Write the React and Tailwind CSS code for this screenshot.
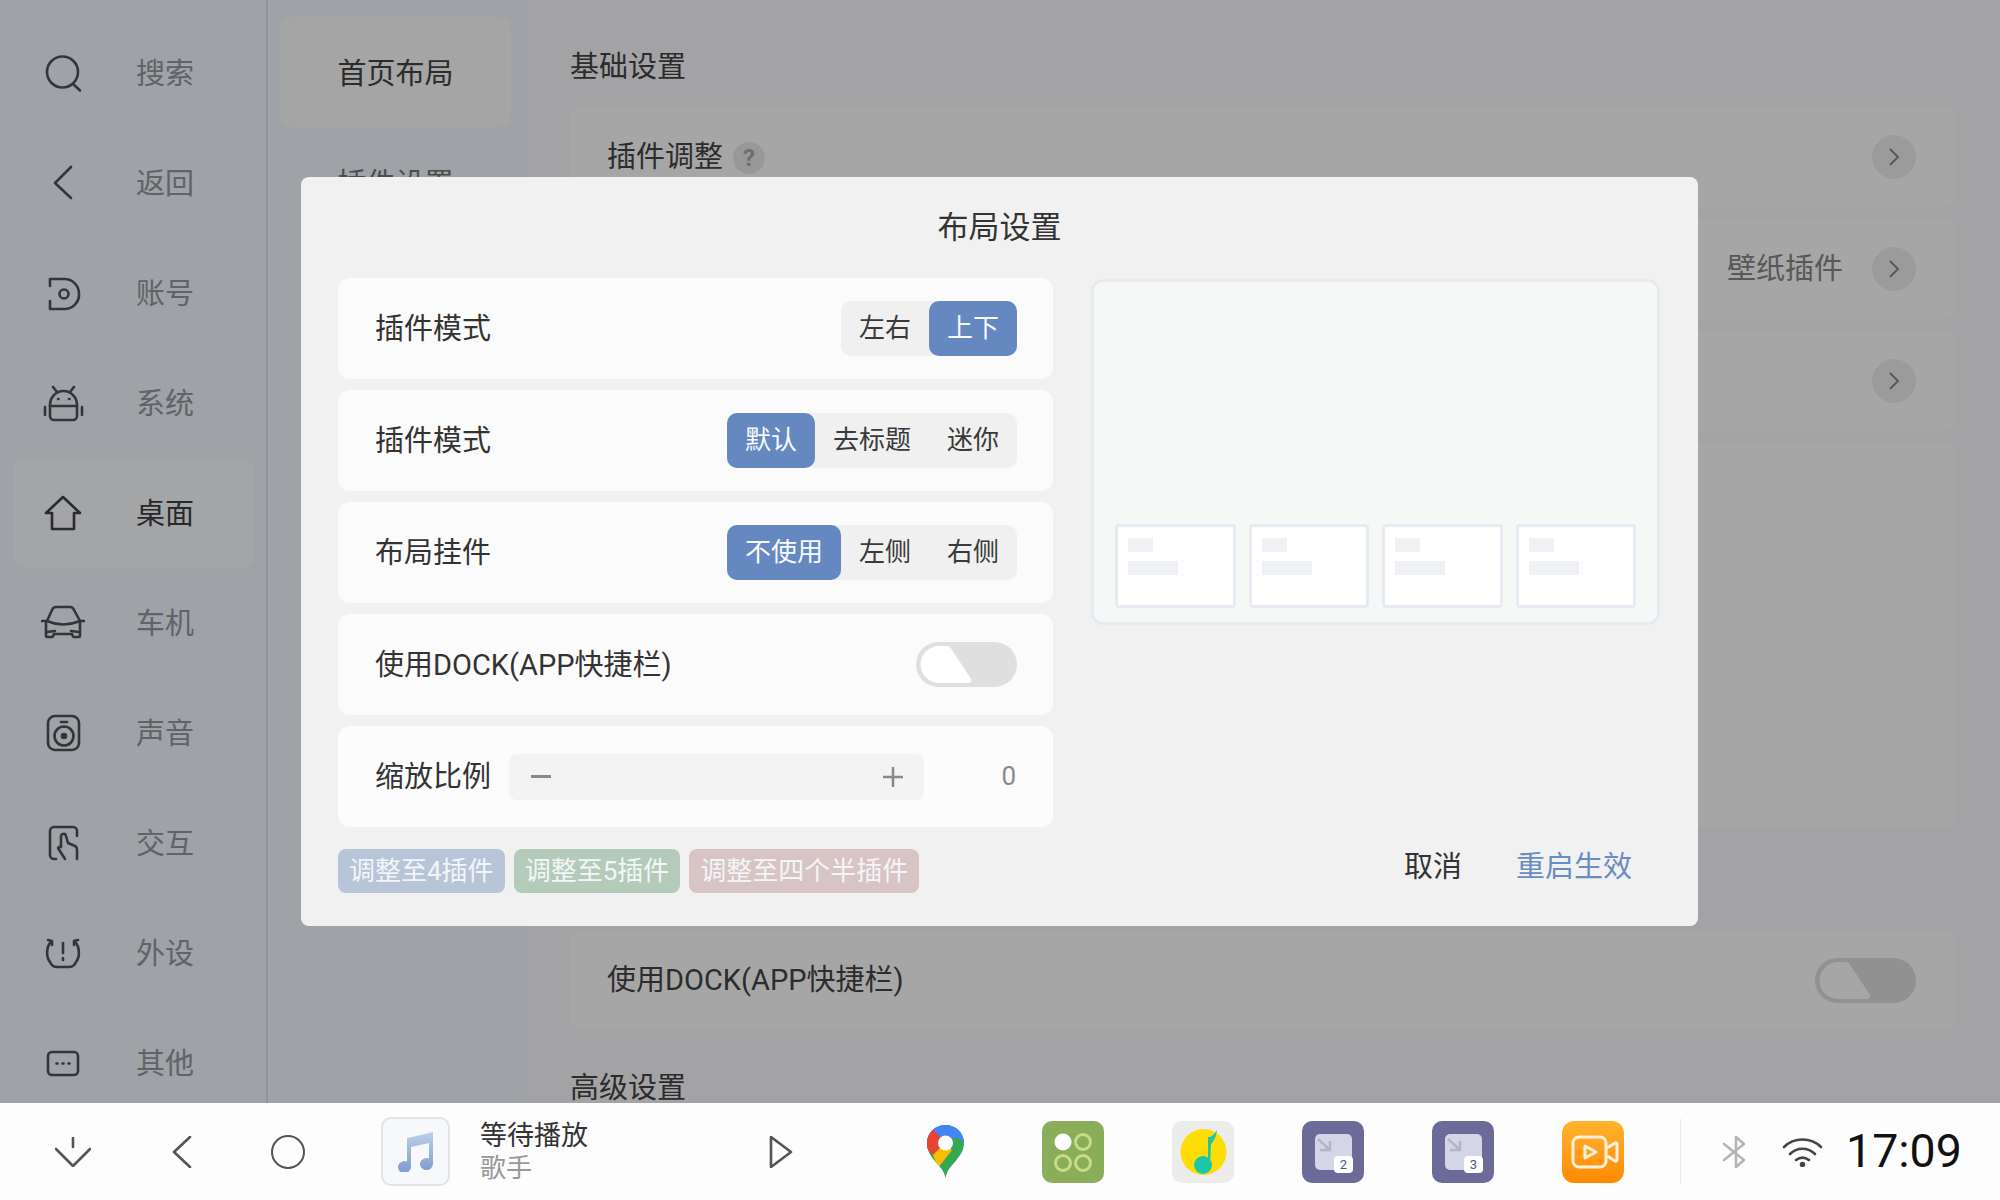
import React from "react";

// sidebar icons, all in a 44 box
const icons = {
  search: (
    <>
      <circle cx="21.5" cy="21" r="15.5" />
      <path d="M32 33l7 6.5" />
    </>
  ),
  back: <path d="M30 6L14 22l16 15" />,
  account: (
    <>
      <path d="M9 15V8h14a14.5 14.5 0 0 1 15 14.5A14.5 14.5 0 0 1 23 38H9v-8" />
      <circle cx="23" cy="23" r="4.5" />
    </>
  ),
  android: (
    <>
      <path d="M9 24a13.500 14 0 0 1 27 0v11a4 4 0 0 1-4 4H13a4 4 0 0 1-4-4Z" />
      <path d="M9 25h27M12 6l4 5M33 6l-4 5M4 26v8M41 26v8" />
      <path d="M17 18h.5M28 18h.5" />
    </>
  ),
  home: <path d="M22 6L5 22h6v16h22V22h6Z" />,
  car: (
    <>
      <path d="M6 20L11 9q1-3 4-3h14q3 0 4 3l6 11" />
      <path d="M6 20Q22 27 39 20M1 20h5M39 20h4" />
      <path d="M5 21v14q0 1 1 1h5q1 0 2-3h18q1 3 2 3h5q1 0 1-1V21M6 31l8-1M38 31l-8-1" />
    </>
  ),
  speaker: (
    <>
      <rect x="7" y="5" width="31" height="34" rx="7" />
      <circle cx="23" cy="25" r="9.500" />
      <circle cx="23" cy="25" r="2" fill="currentColor" />
      <path d="M20 11h6" />
    </>
  ),
  touch: (
    <>
      <path d="M15 38h-2a4 4 0 0 1-4-4V10a4 4 0 0 1 4-4h19a4 4 0 0 1 4 4v5" />
      <path d="M24 38L17 27q2-2 3-1L20 16a2.500 2.500 0 0 1 5-1l2 7 7 3q2 1 2 4v9" />
    </>
  ),
  warn: (
    <>
      <path d="M10 11c-5 5-5 15-1 20q2 5 7 5h12q5 0 7-5c4-5 4-15-1-20" />
      <path d="M7 9l4 1 0 4M37 9l-4 1 0 4M22 12v10M22 27v2" />
    </>
  ),
  more: (
    <>
      <rect x="7" y="11" width="30" height="23" rx="4" />
      <path d="M15.500 22.500h1M21.500 22.500h1M27.500 22.500h1" />
    </>
  ),
};

const NAV = [
  ["search", "搜索"],
  ["back", "返回"],
  ["account", "账号"],
  ["android", "系统"],
  ["home", "桌面", true],
  ["car", "车机"],
  ["speaker", "声音"],
  ["touch", "交互"],
  ["warn", "外设"],
  ["more", "其他"],
];

function NavIcon({ name, active }) {
  return (
    <svg
      viewBox="0 0 44 44"
      fill="none"
      stroke="currentColor"
      strokeWidth="2.600"
      strokeLinecap="round"
      strokeLinejoin="round"
      className={`w-11 h-11 shrink-0 ${active ? "text-[#3f4247]" : "text-[#4f5358]"}`}
    >
      {icons[name]}
    </svg>
  );
}

function Sidebar() {
  return (
    <div className="w-[268px] shrink-0 h-full bg-[#f5f9ff] border-r-2 border-[#dee2ea] pt-[18px] overflow-hidden">
      {NAV.map(([icon, label, active]) => (
        <div
          key={label}
          className={`h-[110px] w-[241px] ml-[13px] pl-[28px] flex items-center gap-[51px] rounded-xl ${
            active ? "bg-[#fcfdff]" : ""
          }`}
        >
          <NavIcon name={icon} active={active} />
          <span className={`pt-[2px] text-[29px] leading-none ${active ? "text-[#3c3f44]" : "text-[#94989e]"}`}>{label}</span>
        </div>
      ))}
    </div>
  );
}

function SubMenu() {
  return (
    <div className="w-[257px] shrink-0 h-full bg-[#f5f9ff] pl-[12px] pt-[17px]">
      <div className="w-[231px] h-[110px] pt-[5px] rounded-xl bg-[#fdfdff] flex items-center justify-center text-[29px] text-[#444]">
        首页布局
      </div>
      <div className="w-[231px] h-[110px] pt-[5px] flex items-center justify-center text-[29px] text-[#777]">插件设置</div>
    </div>
  );
}

function Toggle() {
  return (
    <div className="w-[101px] h-[45px] rounded-full bg-[#dfdfdf] shrink-0">
      <svg viewBox="0 0 101 45" className="w-[101px] h-[45px]">
        <path d="M23 4h8q3 0 5 4l19 29q1 4-3 4H23a18.500 18.500 0 0 1 0-37Z" fill="#fff" />
      </svg>
    </div>
  );
}

function Chevron() {
  return (
    <span className="w-11 h-11 rounded-full bg-[#efefef] flex items-center justify-center shrink-0">
      <svg viewBox="0 0 20 20" fill="none" stroke="#888" strokeWidth="2" className="w-5 h-5">
        <path d="M6 2l8 8-8 8" />
      </svg>
    </span>
  );
}

function BackRow({ children, right }) {
  return (
    <div className="h-[101px] rounded-xl bg-white pl-[37px] pr-[40px] flex items-center justify-between mb-[11px]">
      <div className="flex items-center gap-[10px] pt-[2px] text-[29px] text-[#444]">{children}</div>
      {right}
    </div>
  );
}

function MainContent() {
  return (
    <div className="flex-1 h-full bg-[#fafbfe] pl-[45px] pr-[44px] pt-[46px] overflow-hidden">
      <div className="h-[40px] mb-[20px] pt-[1px] text-[29px] leading-[40px] text-[#444]">基础设置</div>
      <BackRow right={<Chevron />}>
        插件调整
        <span className="w-8 h-8 rounded-full bg-[#eaeaea] text-[#aaa] text-[24px] font-bold flex items-center justify-center">
          ?
        </span>
      </BackRow>
      <BackRow
        right={
          <div className="flex items-center gap-[29px]">
            <span className="pt-[3px] text-[29px] text-[#888]">壁纸插件</span>
            <Chevron />
          </div>
        }
      />
      <BackRow right={<div className="ml-auto"><Chevron /></div>} />
      <div className="h-[386px] rounded-xl bg-white" />
      <div className="h-[100px] mt-[102px] rounded-xl bg-white pl-[37px] pr-[40px] flex items-center justify-between">
        <span className="pt-[2px] text-[29px] text-[#444]">使用DOCK(APP快捷栏)</span>
        <Toggle />
      </div>
      <div className="mt-[38px] h-[40px] text-[29px] leading-[40px] text-[#444]">高级设置</div>
    </div>
  );
}

function Segment({ items, value }) {
  return (
    <div className="flex h-[55px] rounded-[10px] bg-[#f0f0f0]">
      {items.map((item) => (
        <div
          key={item}
          className={`px-[18px] flex items-center text-[26px] rounded-[10px] ${
            item === value ? "bg-[#6488bf] text-[#f7f9fc]" : "text-[#3a3a3a]"
          }`}
        >
          {item}
        </div>
      ))}
    </div>
  );
}

function Row({ label, children }) {
  return (
    <div className="h-[101px] rounded-xl bg-[#fbfbfb] pl-[37px] pr-[36px] flex items-center justify-between">
      <span className="pt-[2px] text-[29px] text-[#333] whitespace-nowrap">{label}</span>
      {children}
    </div>
  );
}

function Preview() {
  return (
    <div className="w-[569px] h-[346px] -ml-[2px] rounded-xl border-[3px] border-[#e8eaf1] bg-[#f6f8f8] flex items-end gap-[13px] px-[21px] pb-[14px]">
      {[0, 1, 2, 3].map((i) => (
        <div key={i} className="w-[121px] h-[84px] rounded-[4px] border-[3px] border-[#e8eaf1] bg-white pl-[10px] pt-[11px]">
          <div className="w-[25px] h-[14px] bg-[#f0f1f5]" />
          <div className="w-[50px] h-[14px] mt-[9px] bg-[#f0f1f5]" />
        </div>
      ))}
    </div>
  );
}

function Modal() {
  return (
    <div className="absolute inset-0 pr-[1px] bg-black/35 flex items-center justify-center">
      <div className="w-[1397px] h-[749px] rounded-lg bg-[#f1f1f1] flex flex-col">
        <div className="h-[101px] pt-[1px] flex items-center justify-center text-[31px] text-[#333]">布局设置</div>
        <div className="flex px-[37px] gap-[40px] flex-1">
          <div className="w-[715px] flex flex-col gap-[11px]">
            <Row label="插件模式">
              <Segment items={["左右", "上下"]} value="上下" />
            </Row>
            <Row label="插件模式">
              <Segment items={["默认", "去标题", "迷你"]} value="默认" />
            </Row>
            <Row label="布局挂件">
              <Segment items={["不使用", "左侧", "右侧"]} value="不使用" />
            </Row>
            <Row label="使用DOCK(APP快捷栏)">
              <Toggle />
            </Row>
            <div className="h-[101px] rounded-xl bg-[#fcfcfc] pl-[37px] pr-[37px] flex items-center">
              <span className="pt-[2px] text-[29px] text-[#333] whitespace-nowrap">缩放比例</span>
              <div className="ml-[18px] w-[415px] h-[46px] rounded-lg bg-[#f3f3f3] flex items-center justify-between pl-[22px] pr-[21px] text-[#777]">
                <span className="w-5 h-[3px] bg-[#888]" />
                <svg viewBox="0 0 20 20" stroke="#888" strokeWidth="2.500" className="w-5 h-5">
                  <path d="M0 10h20M10 0v20" />
                </svg>
              </div>
              <span className="ml-auto text-[26px] text-[#8a8a8a]">0</span>
            </div>
            <div className="flex gap-[9px] mt-[11px]">
              <span className="h-[44px] px-[11px] rounded-lg bg-[#b8c4d8] text-[#f3f5f8] text-[26px] flex items-center">调整至4插件</span>
              <span className="h-[44px] px-[11px] rounded-lg bg-[#b3cbb8] text-[#f3f5f8] text-[26px] flex items-center">调整至5插件</span>
              <span className="h-[44px] px-[11px] rounded-lg bg-[#d8c4c4] text-[#f3f5f8] text-[26px] flex items-center">调整至四个半插件</span>
            </div>
          </div>
          <div className="flex-1 flex flex-col">
            <div className="mt-[1px]">
              <Preview />
            </div>
            <div className="flex justify-end gap-[54px] pr-[29px] mt-[221px] text-[29px] leading-[42px]">
              <span className="text-[#333]">取消</span>
              <span className="text-[#6a8dbf]">重启生效</span>
            </div>
          </div>
        </div>
      </div>
    </div>
  );
}

function Line({ className, children, viewBox }) {
  return (
    <svg viewBox={viewBox} fill="none" stroke="#555" strokeWidth="2.600" strokeLinecap="round" strokeLinejoin="round" className={className}>
      {children}
    </svg>
  );
}

function MapPin() {
  return (
    <svg viewBox="0 0 37 53" className="w-[37px] h-[53px]">
      <defs>
        <clipPath id="pin">
          <path d="M18.500 0C8 0 0 8 0 18c0 7 3 12 7 17 5 6 10 10 11.500 18 1.500-8 6-12 11-18 4-5 7.500-10 7.500-17C37 8 29 0 18.500 0Z" />
        </clipPath>
      </defs>
      <g clipPath="url(#pin)">
        <rect width="37" height="53" fill="#34a853" />
        <path d="M4 4L18 0h19v18L30 12 18 18Z" fill="#4285f4" />
        <path d="M0 0h18L25 5 6 24l-6 0Z" fill="#4285f4" />
        <path d="M0 8l7-3 11 13L6 30 0 24Z" fill="#ea4335" />
        <path d="M6 30l12-12 7 7-14 18Z" fill="#fbbc04" />
      </g>
      <circle cx="18.500" cy="18" r="7.500" fill="#fff" />
    </svg>
  );
}

function GreenApp() {
  return (
    <svg viewBox="0 0 62 62" className="w-[62px] h-[62px] rounded-[10px] bg-[#8aad5a]">
      <ellipse cx="21" cy="21" rx="8.500" ry="8.500" fill="#fff" />
      <g fill="none" stroke="#c9dc85" strokeWidth="3">
        <circle cx="41" cy="21" r="7.500" />
        <circle cx="21" cy="42" r="7.500" />
        <circle cx="41" cy="42" r="7.500" />
      </g>
    </svg>
  );
}

function QQMusic() {
  return (
    <svg viewBox="0 0 62 62" className="w-[62px] h-[62px] rounded-[10px] bg-[#ececec]">
      <circle cx="31.500" cy="31" r="23" fill="#fedc05" />
      <circle cx="31" cy="44" r="9" fill="#1cc7a8" />
      <path d="M36 44V16q4 1 9-7-1 9-6 14l-1 21Z" fill="#1cc7a8" />
    </svg>
  );
}

function SplitApp({ n }) {
  return (
    <div className="relative w-[62px] h-[62px] rounded-[10px] bg-[#6b6a99]">
      <div className="absolute left-[13px] top-[13px] w-[37px] h-[36px] rounded-[5px] bg-[#d5d5e8]" />
      <svg viewBox="0 0 62 62" fill="none" stroke="#b3b3cc" strokeWidth="2.500" className="absolute inset-0">
        <path d="M16 18l12 11M28 20v9h-10" />
      </svg>
      <span className="absolute left-[32px] top-[35px] w-[19px] h-[17px] rounded-[4px] bg-white text-[#55557a] text-[13px] leading-[17px] text-center">
        {n}
      </span>
    </div>
  );
}

function VideoApp() {
  return (
    <svg viewBox="0 0 62 62" className="w-[62px] h-[62px] rounded-xl bg-gradient-to-b from-[#ffb32c] to-[#ff8a00]" fill="none" stroke="#fdf1dc" strokeWidth="3" strokeLinejoin="round">
      <rect x="11" y="16" width="33" height="30" rx="6" />
      <path d="M23 25l11 6-11 6Z" />
      <path d="M45 27l8-5q2-1 2 2v14q0 3-2 2l-8-5" />
    </svg>
  );
}

function BottomBar() {
  return (
    <div className="h-[97px] shrink-0 bg-[#fdfdfd] flex items-center">
      <div className="w-[859px] flex items-center">
        <div className="ml-[55px]">
          <Line viewBox="0 0 36 30" className="w-9 h-[30px]">
            <path d="M18 1v9M1 12l17 17 17-17" />
          </Line>
        </div>
        <div className="ml-[81px]">
          <Line viewBox="0 0 20 32" className="w-5 h-8">
            <path d="M18 1L2 16l16 15" />
          </Line>
        </div>
        <div className="ml-[79px] w-[34px] h-[34px] rounded-full border-[2.5px] border-[#555]" />
        <div className="ml-[76px] w-[69px] h-[69px] rounded-[10px] border-2 border-[#e4e2e6] bg-[#f6f8fc] flex items-center justify-center">
          <svg viewBox="0 0 36 40" className="w-9 h-10">
            <defs>
              <linearGradient id="note" x1="0" y1="0" x2="0" y2="1">
                <stop offset="0" stopColor="#bfcfe9" />
                <stop offset="1" stopColor="#7d9bcf" />
              </linearGradient>
            </defs>
            <path d="M10 6l25-6v32a6.500 6 0 1 1-4-5.500V11L13 15v20a6.500 6 0 1 1-4-5.500V6Z" fill="url(#note)" />
          </svg>
        </div>
        <div className="ml-[30px] w-[289px] flex flex-col">
          <span className="text-[27px] leading-[33px] text-[#333]">等待播放</span>
          <span className="text-[26px] leading-[30px] text-[#999]">歌手</span>
        </div>
        <Line viewBox="0 0 24 32" className="w-6 h-8">
          <path d="M2 1l20 15L2 31Z" />
        </Line>
      </div>
      <div className="flex-1 flex items-center">
        <div className="ml-[68px]"><MapPin /></div>
        <div className="ml-[78px]"><GreenApp /></div>
        <div className="ml-[68px]"><QQMusic /></div>
        <div className="ml-[68px]"><SplitApp n="2" /></div>
        <div className="ml-[68px]"><SplitApp n="3" /></div>
        <div className="ml-[68px]"><VideoApp /></div>
        <div className="ml-[56px] w-[1px] h-[65px] bg-[#e8e8e8]" />
        <svg viewBox="0 0 25 34" fill="none" stroke="#b5b5b5" strokeWidth="2.600" strokeLinejoin="round" strokeLinecap="round" className="ml-[41px] w-[25px] h-[34px]">
          <path d="M2 9l20 16-8 7V2l8 7L2 25" />
        </svg>
        <svg viewBox="0 0 41 30" fill="none" stroke="#444" strokeWidth="2.600" strokeLinecap="round" className="ml-[35px] w-[41px] h-[30px]">
          <path d="M2 10c10-10 27-10 37 0M8 17c7-7 18-7 25 0M14 23c4-3 9-3 13 0" />
          <circle cx="20.500" cy="27.500" r="1.500" fill="#444" />
        </svg>
        <span className="ml-[23px] text-[46.5px] leading-none text-[#111]">17:09</span>
      </div>
    </div>
  );
}

export default function App() {
  return (
    <div className="w-[2000px] h-[1200px] flex flex-col overflow-hidden font-['Roboto','Noto_Sans_CJK_SC',sans-serif]">
      <div className="relative h-[1103px] flex overflow-hidden">
        <Sidebar />
        <SubMenu />
        <MainContent />
        <Modal />
      </div>
      <BottomBar />
    </div>
  );
}
